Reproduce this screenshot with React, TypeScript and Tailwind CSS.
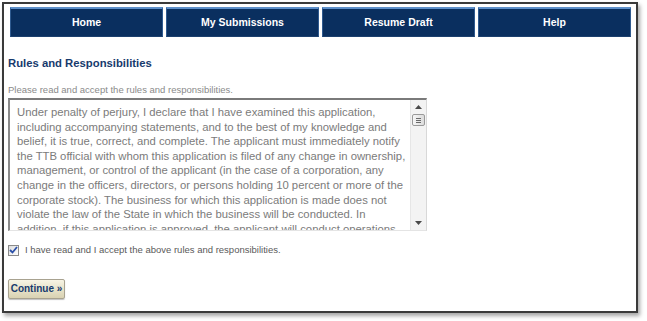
import React from "react";

const lines = [
  "Under penalty of perjury, I declare that I have examined this application,",
  "including accompanying statements, and to the best of my knowledge and",
  "belief, it is true, correct, and complete. The applicant must immediately notify",
  "the TTB official with whom this application is filed of any change in ownership,",
  "management, or control of the applicant (in the case of a corporation, any",
  "change in the officers, directors, or persons holding 10 percent or more of the",
  "corporate stock). The business for which this application is made does not",
  "violate the law of the State in which the business will be conducted. In",
  "addition, if this application is approved, the applicant will conduct operations",
];

const navItems = ["Home", "My Submissions", "Resume Draft", "Help"];

export default function App() {
  return (
    <div className="w-[647px] h-[321px] bg-white overflow-hidden" style={{ fontFamily: '"Liberation Sans", Arial, sans-serif' }}>
      <div className="ml-[2px] mt-[2px] w-[636px] h-[311px] border-2 border-[#3a3a3a] bg-white shadow-[2px_3px_4px_rgba(0,0,0,0.35)] px-[4px] pt-[3px]">
        <div className="ml-[2px] mr-[1px] grid grid-cols-4 gap-[3px]">
          {navItems.map((n) => (
            <div
              key={n}
              className="h-[30px] bg-[#0a2f5f] border-t-2 border-t-[#5d8fc9] border-x border-x-[#2f5a8f] border-b border-b-[#1c406e] flex items-center justify-center text-white text-[10.5px] font-bold"
            >
              {n}
            </div>
          ))}
        </div>
        <div>
          <div className="mt-[19px] text-[11.3px] leading-[15px] font-bold text-[#173a6d]">Rules and Responsibilities</div>
          <div className="mt-[13px] text-[9.5px] leading-[12px] text-[#8a8a8a]">Please read and accept the rules and responsibilities.</div>
          <div className="mt-[2px] w-[419px] h-[133px] border-t-2 border-t-[#7a7a7a] border-l-2 border-l-[#8a8a8a] border-r border-r-[#d8d8d8] border-b border-b-[#e4e4e4] flex overflow-hidden">
            <div className="flex-1 pl-[7px] pt-[5px] text-[11.3px] leading-[14.6px] text-[#7b7b7b] overflow-hidden">
              {lines.map((l, i) => (
                <div key={i} className="whitespace-nowrap">
                  {l}
                </div>
              ))}
            </div>
            <div className="w-[16px] bg-[#f3f3f3] border-l border-l-[#e6e6e6] flex flex-col items-center">
              <div className="h-[14px] flex items-center justify-center">
                <svg width="7" height="4" viewBox="0 0 7 4">
                  <path d="M0 4 L3.5 0 L7 4 Z" fill="#4a4a4a" />
                </svg>
              </div>
              <div className="w-[13px] h-[12px] border border-[#9a9a9a] rounded-[2px] bg-gradient-to-r from-[#f6f6f6] to-[#dcdcdc] flex flex-col items-center justify-center gap-[1px]">
                <div className="w-[5px] h-px bg-[#6a6a6a]" />
                <div className="w-[5px] h-px bg-[#6a6a6a]" />
                <div className="w-[5px] h-px bg-[#6a6a6a]" />
              </div>
              <div className="flex-1" />
              <div className="h-[14px] flex items-center justify-center">
                <svg width="7" height="4" viewBox="0 0 7 4">
                  <path d="M0 0 L3.5 4 L7 0 Z" fill="#4a4a4a" />
                </svg>
              </div>
            </div>
          </div>
          <div className="mt-[13px] flex items-center gap-[6px]">
            <div className="w-[11px] h-[11px] border border-[#8a8a8a] bg-gradient-to-br from-[#dcdcdc] to-[#ffffff] flex items-center justify-center">
              <svg width="9" height="8" viewBox="0 0 9 8">
                <path d="M1 4 L3.5 6.5 L8 1" stroke="#2a4fa8" strokeWidth="1.8" fill="none" />
              </svg>
            </div>
            <span className="text-[9.5px] leading-[12px] text-[#5a5a5a]">I have read and I accept the above rules and responsibilities.</span>
          </div>
          <div className="mt-[19px]">
            <div className="inline-flex items-center justify-center w-[57px] h-[20px] border border-[#a8a290] rounded-[2px] bg-gradient-to-b from-[#f7f4e4] to-[#d9d2b2] shadow-[0_1px_1px_rgba(0,0,0,0.25)] text-[10px] font-bold text-[#173a6d]">
              Continue »
            </div>
          </div>
        </div>
      </div>
    </div>
  );
}
